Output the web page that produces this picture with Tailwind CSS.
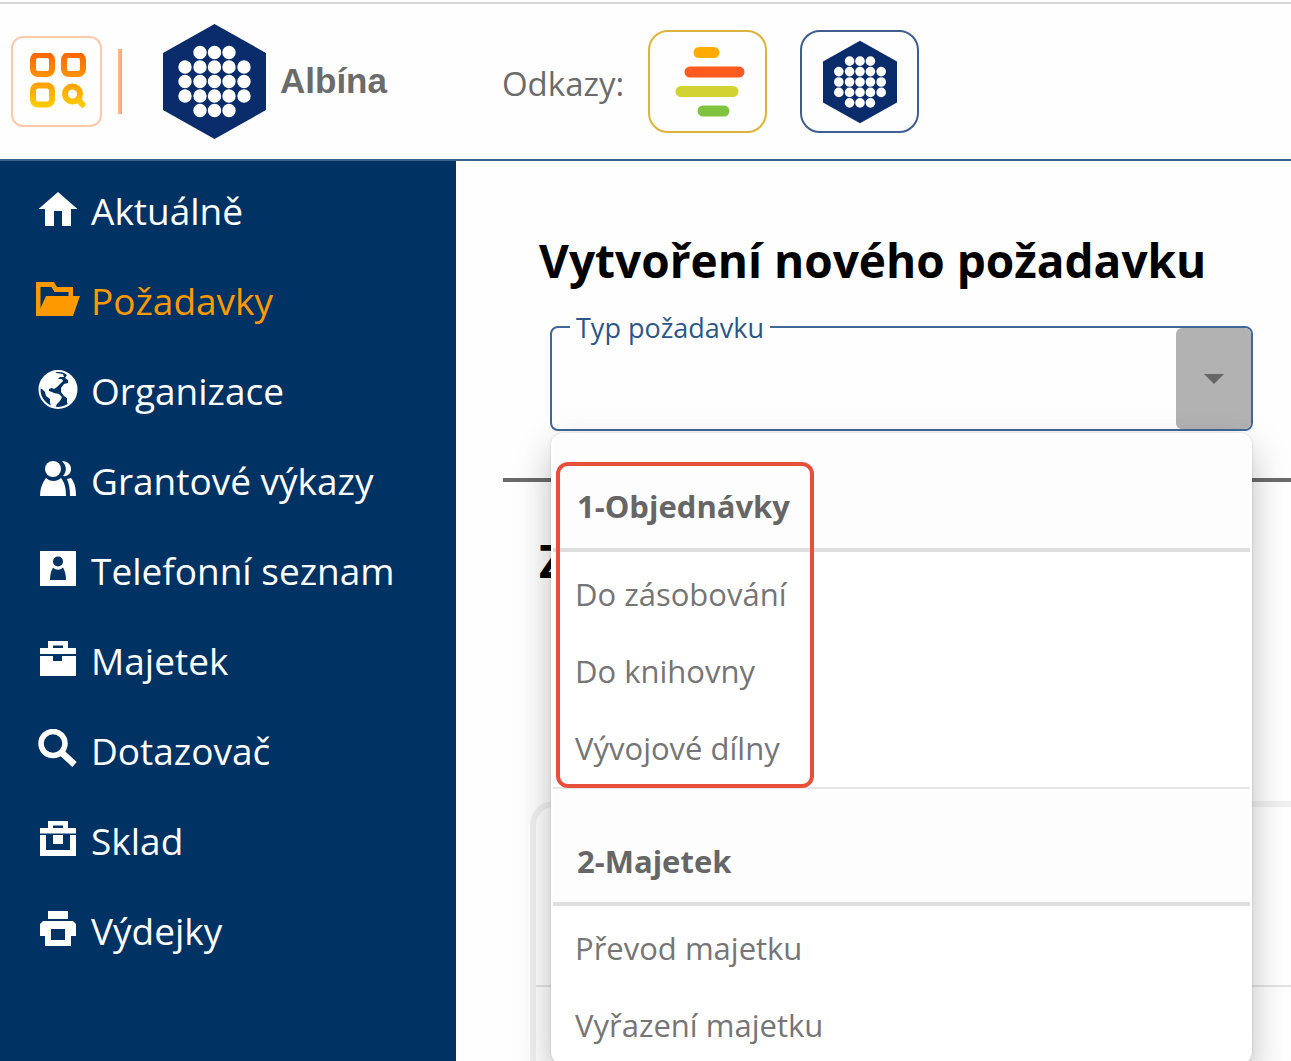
<!DOCTYPE html>
<html lang="cs">
  <head>
    <meta charset="UTF-8" />
    <meta name="viewport" content="width=device-width, initial-scale=1.0" />
    <title>Albína</title>
    <script src="https://cdn.jsdelivr.net/npm/@tailwindcss/browser@4"></script>
  </head>
  <body
    class="flex h-screen flex-col overflow-hidden bg-[#fefefe] font-['Open_Sans','Noto_Sans',sans-serif]"
  >
    <!-- shared logo -->
    <svg class="hidden" aria-hidden="true">
      <symbol id="logo" viewBox="0 0 103 115">
        <path fill="#0a2c6b" d="M51.5 0 103 29v57l-51.5 29L0 86V29z" />
        <path
          stroke="#fefefe"
          stroke-width="13.4"
          stroke-linecap="round"
          d="M37 28.5h0M51.5 28.5h0M66 28.5h0M22 43h0M37 43h0M51.5 43h0M66 43h0M81 43h0M22 57.5h0M37 57.5h0M51.5 57.5h0M66 57.5h0M81 57.5h0M22 72h0M37 72h0M51.5 72h0M66 72h0M81 72h0M37 86.5h0M51.5 86.5h0M66 86.5h0"
        />
      </symbol>
    </svg>

    <header
      class="mt-0.5 flex h-[159px] shrink-0 items-center border-t-2 border-b-2 border-t-[#d6d6d6] border-b-[#3f6190] pl-[11px] text-[#6b6b6b]"
    >
      <button
        type="button"
        aria-label="Aplikace"
        class="flex size-[91px] items-center justify-center rounded-xl border-2 border-[#ffc8a8]"
      >
        <svg class="size-[58px]" viewBox="0 0 58 58" fill="none">
          <defs>
            <linearGradient id="apps" gradientUnits="userSpaceOnUse" x1="0" y1="2" x2="0" y2="56">
              <stop offset="0" stop-color="#ff6a00" />
              <stop offset="1" stop-color="#ffd000" />
            </linearGradient>
          </defs>
          <g stroke="url(#apps)" stroke-width="6">
            <rect x="5" y="2" width="19" height="19" rx="5" />
            <rect x="36" y="2" width="19" height="19" rx="5" />
            <rect x="5" y="32.500" width="19" height="19" rx="5" />
            <circle cx="44.500" cy="41" r="7.500" />
            <path stroke-linecap="round" d="m50.500 47 4 4.500" />
          </g>
        </svg>
      </button>
      <div class="ml-4 h-[65px] w-1 bg-linear-to-r from-[#ffc078] to-[#ff9c90]"></div>
      <svg class="ml-[41px] h-[115px] w-[103px]"><use href="#logo" /></svg>
      <span class="ml-[14px] font-['Liberation_Sans',sans-serif] text-[35px] font-bold">Albína</span>
      <span class="ml-[115px] pt-1 text-[33px]">Odkazy:</span>
      <a
        href="#"
        aria-label="Přehled"
        class="ml-6 flex h-[103px] w-[119px] items-center justify-center rounded-[20px] border-2 border-[#dcb43c] pl-1"
      >
        <svg class="h-[71px] w-[70px]" viewBox="0 0 70 71" stroke-width="11" stroke-linecap="round">
          <path stroke="#ffab00" d="M24 6.500h15" />
          <path stroke="#ff5a1f" d="M15 26h49" />
          <path stroke="#d3d233" d="M6 45.500h52" />
          <path stroke="#7fc33f" d="M28 65h21" />
        </svg>
      </a>
      <a
        href="#"
        aria-label="Albína"
        class="ml-[33px] flex h-[103px] w-[119px] items-center justify-center rounded-[20px] border-2 border-[#3f5d8f]"
      >
        <svg class="h-[84px] w-[74px]"><use href="#logo" /></svg>
      </a>
    </header>

    <div class="flex min-h-0 grow">
      <nav class="w-[456px] shrink-0 bg-[#003264] pt-[5px] text-[37px] text-white">
        <a href="#" class="flex h-[90px] items-center gap-[11px] pl-9">
          <svg class="size-11" viewBox="0 0 44 44" fill="currentColor">
            <path d="M22 3 41.500 20H35v17H26V22H18v15H9V20H2.500z" />
          </svg>
          Aktuálně
        </a>
        <a href="#" class="flex h-[90px] items-center gap-[11px] pl-9 text-[#ff9900]">
          <svg class="size-11" viewBox="0 0 44 44" fill="currentColor">
            <path
              fill-rule="evenodd"
              d="M0 3H18L21 8H37V17H44L37 37H0zM4.500 8V29L10 17H32.500V13H18.500L15.500 8z"
            />
          </svg>
          Požadavky
        </a>
        <a href="#" class="flex h-[90px] items-center gap-[11px] pl-9">
          <svg class="size-11" viewBox="0 0 44 44">
            <circle cx="22" cy="20.500" r="18.500" fill="none" stroke="currentColor" stroke-width="2" />
            <path
              fill="currentColor"
              d="M5 14C8 7 13 3 19 2l1 2 7 1 1 3-4 0-2 2 4 0 1 2-3 3-3 3-3 2-2-1-3 1 0 2 3 1 2 1 5 1 3 3-2 4-3 3-2 4-3 0-2-5 0-4-4-3-1-4-3-3-3-1zM27 3c8 2 13 8 14 16 0 8-4 14-9 17l-1-3 0-4-3-2-3-4 0-4 3-4 4-1 0-3-3-2 2-3z"
            />
          </svg>
          Organizace
        </a>
        <a href="#" class="flex h-[90px] items-center gap-[11px] pl-9">
          <svg class="size-11" viewBox="0 0 44 44" fill="currentColor">
            <circle cx="17" cy="10" r="8" />
            <path
              d="M4 37C4 30 6 24 10 19c4 4 11 4 15 0 4 5 5 11 5 18zM26 2c6 0 9 4 9 8s-3 8-8 7c4-5 4-10-1-15zM31 20l4-1c4 5 5 11 5 18H34c0-7-1-12-3-17z"
            />
          </svg>
          Grantové výkazy
        </a>
        <a href="#" class="flex h-[90px] items-center gap-[11px] pl-9">
          <svg class="size-11" viewBox="0 0 44 44" fill="currentColor">
            <path
              fill-rule="evenodd"
              d="M4 2H40V37H4zM22 7.500a5 5 0 0 0 0 10 5 5 0 0 0 0-10zM17 18.500C15 22 14 26 14 31H30c0-5-1-9-3-12.500-3 3-7 3-10 0z"
            />
          </svg>
          Telefonní seznam
        </a>
        <a href="#" class="flex h-[90px] items-center gap-[11px] pl-9">
          <svg class="size-11" viewBox="0 0 44 44" fill="currentColor">
            <path
              fill-rule="evenodd"
              d="M12 2H32V9H40V15H4V9H12zM17 6.500V9H27V6.500zM4 17H17V22H26V17H40V37H4z"
            />
          </svg>
          Majetek
        </a>
        <a href="#" class="flex h-[90px] items-center gap-[11px] pl-9">
          <svg class="size-11" viewBox="0 0 44 44" fill="none" stroke="currentColor">
            <circle cx="17" cy="14.500" r="12" stroke-width="5.500" />
            <path stroke-width="6.500" d="m25.500 23.500 13 12" />
          </svg>
          Dotazovač
        </a>
        <a href="#" class="flex h-[90px] items-center gap-[11px] pl-9">
          <svg class="size-11" viewBox="0 0 44 44" fill="currentColor">
            <path
              fill-rule="evenodd"
              d="M12 2H32V9H40V14.500H4V9H12zM17 6.500V9H27V6.500zM4 16H10V31H34V16H40V37H4zM17 16H27V25H17z"
            />
          </svg>
          Sklad
        </a>
        <a href="#" class="flex h-[90px] items-center gap-[11px] pl-9">
          <svg class="size-11" viewBox="0 0 44 44" fill="currentColor">
            <path
              fill-rule="evenodd"
              d="M12 2H32V10H12zM7 12H37L40 15V27H35V37H9V27H4V15zM15 20V31H29V20z"
            />
          </svg>
          Výdejky
        </a>
      </nav>

      <main class="flex min-w-0 grow flex-col pt-16 pl-[47px]">
        <h1 class="pl-9 text-[46px] leading-[70px] font-bold text-black">Vytvoření nového požadavku</h1>

        <div class="relative mt-[31px] mr-[38px] ml-[47px]">
          <div class="flex h-[105px] rounded-lg border-2 border-[#3f6896]">
            <input id="typ" type="text" role="combobox" aria-expanded="true" class="min-w-0 grow px-6 text-[31px] outline-none" />
            <button
              type="button"
              aria-label="Rozbalit"
              class="flex w-[75px] items-center justify-center rounded-md bg-[#b2b2b2]"
            >
              <svg class="h-2.5 w-5" viewBox="0 0 20 10" fill="#666"><path d="M0 0h20L10 10z" /></svg>
            </button>
          </div>
          <label for="typ" class="absolute -top-[18px] left-5 bg-[#fefefe] px-1.5 text-[27px] leading-10 text-[#2c5688]">
            Typ požadavku
          </label>

          <div
            role="listbox"
            aria-label="Typ požadavku"
            class="absolute inset-x-px top-full z-10 mt-0.5 rounded-xl bg-white px-0.5 text-[31px] text-[#757575] shadow-[0_16px_36px_rgba(0,0,0,0.25),0_0_3px_rgba(0,0,0,0.15)]"
          >
            <div class="flex h-[119px] items-center rounded-t-xl border-b-4 border-[#dedede] bg-[#fdfdfd] pt-8 pl-6 font-bold text-[#666]">1-Objednávky</div>
            <div class="border-b-2 border-[#e6e6e6] pt-1">
              <button type="button" role="option" class="block h-[77px] w-full pl-[22px] text-left">Do zásobování</button>
              <button type="button" role="option" class="block h-[77px] w-full pl-[22px] text-left">Do knihovny</button>
              <button type="button" role="option" class="block h-[77px] w-full pl-[22px] text-left">Vývojové dílny</button>
            </div>
            <div class="flex h-[117px] items-center border-b-4 border-[#dedede] bg-[#fdfdfd] pt-8 pl-6 font-bold text-[#666]">2-Majetek</div>
            <div class="pt-1">
              <button type="button" role="option" class="block h-[77px] w-full pl-[22px] text-left">Převod majetku</button>
              <button type="button" role="option" class="block h-[77px] w-full pl-[22px] text-left">Vyřazení majetku</button>
            </div>
            <!-- highlight around the first group -->
            <div class="pointer-events-none absolute top-[29px] left-[5px] h-[326px] w-[258px] rounded-xl border-4 border-[#e74f3b]"></div>
          </div>
        </div>

        <hr class="mt-[47px] border-t-4 border-[#6b6b6b]" />
        <h2 class="mt-[43px] pl-9 text-[46px] leading-[70px] font-bold text-black">Z</h2>
        <section class="mt-[206px] ml-[27px] grow rounded-tl-3xl border-t-[6px] border-l-[6px] border-[#f0f0f0]">
          <div class="h-[180px] border-b-2 border-[#e3e3e3]"></div>
        </section>
      </main>
    </div>
  </body>
</html>
